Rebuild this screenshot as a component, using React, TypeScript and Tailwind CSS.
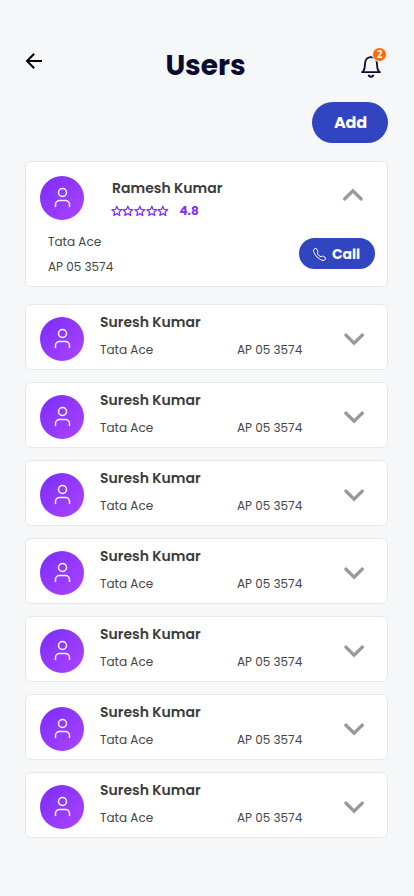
import React, { useState } from "react";
import { User } from "lucide-react";
import { BsTelephone } from "react-icons/bs";

interface Driver {
  id: number;
  name: string;
  vehicle: string;
  plate: string;
  rating: string;
}

interface DriverCardProps {
  driver: Driver;
  open: boolean;
  toggle: () => void;
}

const drivers: Driver[] = [
  { id: 1, name: "Ramesh Kumar", vehicle: "Tata Ace", plate: "AP 05 3574", rating: "4.8" },
  ...[2, 3, 4, 5, 6, 7, 8].map((id) => ({
    id,
    name: "Suresh Kumar",
    vehicle: "Tata Ace",
    plate: "AP 05 3574",
    rating: "4.8",
  })),
];

const Avatar = () => (
  <div className="flex size-11 shrink-0 items-center justify-center rounded-full bg-linear-to-br from-[#7b2bfc] to-[#ad42ff]">
    <User className="size-6 translate-x-[0.5px] -translate-y-[0.5px] text-white" strokeWidth={1.5} />
  </div>
);

const Star = () => (
  <svg className="h-3 w-[11.7px]" viewBox="0 0 12 12" fill="none" stroke="currentColor" strokeWidth="1.3" strokeLinejoin="round">
    <path d="M6 1.1 7.4 4.4 11 4.7 8.3 7.1 9.1 10.6 6 8.7 2.9 10.6 3.7 7.1 1 4.7 4.6 4.4Z" />
  </svg>
);

const Chevron = ({ up }: { up?: boolean }) => (
  <svg
    className={up ? "h-3.5 w-[22px] rotate-180" : "h-3.5 w-[22px]"}
    viewBox="0 0 22 14"
    fill="none"
    stroke="#999999"
    strokeWidth="3.2"
    strokeLinecap="round"
  >
    <path d="M2.8 3 11.1 11.2 19.4 3" />
  </svg>
);

const DriverCard: React.FC<DriverCardProps> = ({ driver, open, toggle }) => {
  if (open) {
    return (
      <div className="mb-[5px] h-[126px] rounded-md border border-[#e6e7e9] bg-white pl-3.5 pr-3">
        <div className="flex pt-3.5">
          <Avatar />
          <div className="ml-7 flex-1 pt-[3px]">
            <p className="text-[14px] font-semibold leading-[18px] text-[#3b3b3b]">{driver.name}</p>
            <div className="-ml-[1.5px] mt-[5px] flex items-center text-[#7f32fb]">
              <Star />
              <Star />
              <Star />
              <Star />
              <Star />
              <span className="ml-[10.5px] text-[12px] font-bold leading-[18px]">{driver.rating}</span>
            </div>
          </div>
          <button className="mr-[11px] mt-3 h-3.5" onClick={toggle}>
            <Chevron up />
          </button>
        </div>
        <div className="flex justify-between pl-2">
          <div className="pt-[9px] text-[12px] leading-[25px] text-[#444444]">
            <p>{driver.vehicle}</p>
            <p>{driver.plate}</p>
          </div>
          <button className="mt-[18px] flex h-[31px] w-[76px] items-center justify-center rounded-full bg-[#3145c1] pr-px pt-px text-[14px] font-bold tracking-[-0.1px] text-white">
            <BsTelephone className="mr-1.5 size-[13px]" />
            Call
          </button>
        </div>
      </div>
    );
  }

  return (
    <div className="flex h-[66px] rounded-md border border-[#e6e7e9] bg-white pl-3.5 pr-[22px]">
      <div className="pt-3">
        <Avatar />
      </div>
      <div className="ml-4 flex-1 pt-2">
        <p className="text-[14px] font-semibold leading-[18px] text-[#3b3b3b]">{driver.name}</p>
        <div className="mt-[10px] flex text-[12px] leading-[18px] text-[#444444]">
          <p className="w-[137px]">{driver.vehicle}</p>
          <p>{driver.plate}</p>
        </div>
      </div>
      <button className="mt-[27px] h-3.5" onClick={toggle}>
        <Chevron />
      </button>
    </div>
  );
};

const App: React.FC = () => {
  const [openId, setOpenId] = useState<number>(1);

  return (
    <div className="min-h-screen bg-[#f5f7f9] pl-[25px] pr-[26px] pt-[45px] font-['Poppins','Inter',sans-serif]">
      <header className="flex h-10 justify-between">
        <button className="mt-2 h-4 w-[17px]">
          <svg viewBox="0 0 17 16" className="h-4 w-[17px]" fill="none" stroke="#000000" strokeWidth="2">
            <path d="M9.2 0.8 2 8 9.2 15.2M2 8H17" />
          </svg>
        </button>
        <h1 className="ml-2 pt-px text-[28px] font-bold leading-10 text-[#0a0b2e]">Users</h1>
        <div className="relative mr-[7px] mt-[11px] h-[22px] w-5">
          <svg viewBox="0 0 20 22" className="h-[22px] w-5" fill="none" stroke="#0a0b2e" strokeWidth="1.8">
            <path d="M0.3 16.1H19.7M2 16C3.6 13.8 4 12.2 4 8.2C4 4.2 6 1.1 10 1.1S16 4.2 16 8.2C16 12.2 16.4 13.8 18 16" />
            <path d="M7.6 18.7C8.2 21.4 11.8 21.4 12.4 18.7" />
          </svg>
          <span className="absolute -right-[6px] -top-[9px] flex size-[15px] items-center justify-center rounded-full border border-white bg-[#ff6a06] font-['Open_Sans',sans-serif] text-[10px] font-bold text-white">
            2
          </span>
        </div>
      </header>

      <div className="mt-[17px] flex justify-end">
        <button className="h-[41px] w-[76px] rounded-full bg-[#3145c1] pl-px text-[16px] font-bold tracking-[-0.2px] text-white">Add</button>
      </div>

      <div className="mt-[18px] flex flex-col gap-3">
        {drivers.map((driver) => (
          <DriverCard
            key={driver.id}
            driver={driver}
            open={openId === driver.id}
            toggle={() => setOpenId(openId === driver.id ? 0 : driver.id)}
          />
        ))}
      </div>
    </div>
  );
};

export default App;
